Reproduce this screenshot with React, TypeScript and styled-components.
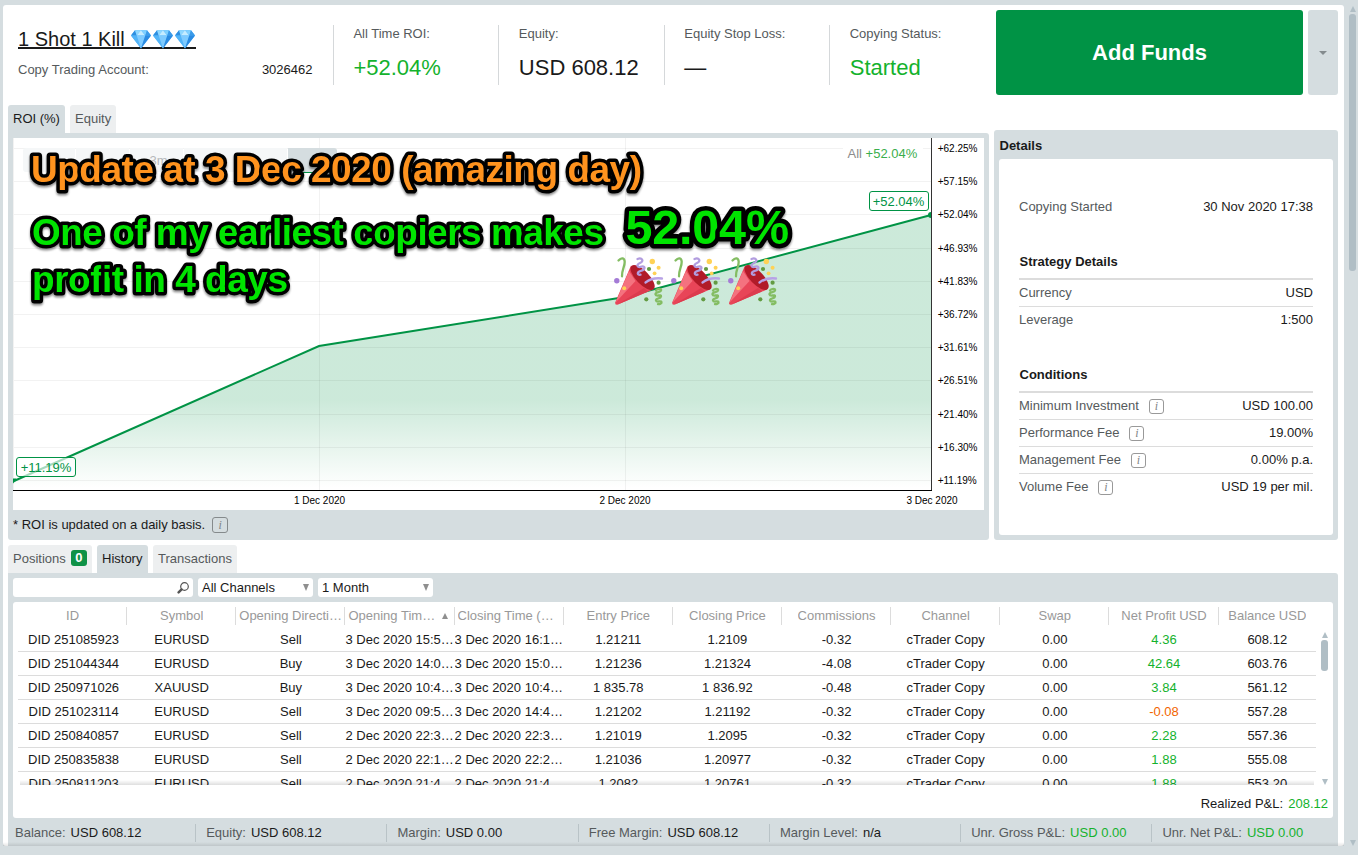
import React from "react";
import styled, { createGlobalStyle } from "styled-components";

const c = {
  frame: "#d5dde0",
  thumb: "#b0bec5",
  green: "#009345",
  bright: "#14b22d",
  text: "#1a1a1a",
  label: "#555a5c",
  muted: "#999",
  line: "#dcdcdc",
};

const GlobalStyle = createGlobalStyle`
  * { box-sizing: border-box; }
  body { margin: 0; background: ${c.frame}; }
  body, button { font-family: "Liberation Sans", Arial, sans-serif; font-size: 13px; color: ${c.text}; }
`;

const Frame = styled.div`
  display: flex;
  height: 855px;
  width: 1358px;
  padding: 5px 0 9px 3px;
  overflow: hidden;
  background: ${c.frame};
`;

const Page = styled.main`
  position: relative;
  width: 1341px;
  height: 841px;
  padding: 5px 6px 0 5px;
  border-radius: 3px;
  background: #fff;
  display: flex;
  flex-direction: column;
  &::after {
    content: "";
    position: absolute;
    left: 0;
    right: 0;
    bottom: 0;
    height: 4px;
    background: linear-gradient(rgba(0, 0, 0, 0), rgba(0, 0, 0, 0.1));
  }
`;

const ScrollRail = styled.div<{ $pad?: string }>`
  display: flex;
  flex-direction: column;
  align-items: center;
  padding: ${(p) => p.$pad || "0"};
`;
const Thumb = styled.div<{ $h: number }>`
  width: 7px;
  height: ${(p) => p.$h}px;
  margin: 2px 0 auto;
  border-radius: 3px;
  background: ${c.thumb};
`;
const Triangle = styled.i<{ $up?: boolean; $w?: number; $h?: number; $color?: string }>`
  display: block;
  flex: none;
  width: 0;
  height: 0;
  border: solid transparent;
  border-width: 0 ${(p) => (p.$w || 7) / 2}px;
  ${(p) => (p.$up ? "border-bottom" : "border-top")}: ${(p) => p.$h || 6}px solid ${(p) => p.$color || c.thumb};
`;

const Header = styled.header`
  display: flex;
  height: 85px;
`;
const Account = styled.section`
  width: 325px;
  padding: 17px 20.5px 0 10px;
`;
const Title = styled.h1`
  display: flex;
  align-items: center;
  height: 22px;
  padding-top: 3px;
  margin: 0;
  width: 178px;
  border-bottom: 2px solid ${c.text};
  font-size: 20px;
  font-weight: 400;
  line-height: 22px;
  white-space: pre;
  svg { flex: none; }
`;
const AccountRow = styled.div`
  display: flex;
  justify-content: space-between;
  margin-top: 13px;
  line-height: 16px;
  color: ${c.label};
  b { font-weight: 400; color: ${c.text}; }
`;
const Stat = styled.div`
  width: 165.45px;
  height: 60px;
  margin-top: 15px;
  padding-left: 19.4px;
  border-left: 1px solid #d5d8da;
  white-space: nowrap;
`;
const StatLabel = styled.div`
  height: 18px;
  line-height: 18px;
  color: ${c.label};
`;
const StatValue = styled.div<{ $good?: boolean }>`
  margin-top: 12px;
  font-size: 22px;
  line-height: 26px;
  color: ${(p) => (p.$good ? c.bright : c.text)};
`;
const AddFunds = styled.button`
  width: 307px;
  margin-left: auto;
  border: 0;
  border-radius: 3px;
  background: ${c.green};
  color: #fff;
  font-size: 22px;
  font-weight: 700;
`;
const MoreButton = styled.button`
  display: flex;
  align-items: center;
  justify-content: center;
  width: 30px;
  margin-left: 5px;
  padding: 1px 0 0;
  border: 0;
  border-radius: 3px;
  background: ${c.frame};
`;

const Middle = styled.div`
  display: flex;
  gap: 5px;
  margin-top: 10px;
  height: 435px;
`;
const ChartColumn = styled.section`
  width: 981px;
`;
const Tabs = styled.div`
  display: flex;
  gap: 5px;
  height: 28px;
`;
const Tab = styled.div<{ $active?: boolean; $w: number }>`
  display: flex;
  align-items: center;
  width: ${(p) => p.$w}px;
  padding: 0 0 2px 5px;
  border-radius: 3px 3px 0 0;
  white-space: nowrap;
  background: ${(p) => (p.$active ? c.frame : "#edeff0")};
  color: ${(p) => (p.$active ? c.text : "#55595b")};
`;
const Badge = styled.span`
  width: 16px;
  height: 16px;
  margin: 0 0 0 5px;
  border-radius: 3px;
  background: #0f9247;
  color: #fff;
  font-weight: 700;
  line-height: 16px;
  text-align: center;
`;
const ChartPanel = styled.div`
  height: 407px;
  padding: 5px 5px 0;
  border-radius: 0 3px 3px 3px;
  background: ${c.frame};
`;
const ChartArea = styled.div`
  position: relative;
  height: 372px;
  background: #fff;
  > svg { display: block; }
`;
const Note = styled.div`
  display: flex;
  align-items: center;
  height: 29px;
`;
const InfoBox = styled.span<{ $gap: number; $size?: number }>`
  display: inline-flex;
  align-items: center;
  justify-content: center;
  width: ${(p) => p.$size || 15}px;
  height: ${(p) => p.$size || 15}px;
  margin-left: ${(p) => p.$gap}px;
  border: 1px solid #858a8c;
  border-radius: 3px;
  color: #7f8486;
  font: italic 12px/12px "Liberation Serif", "Times New Roman", serif;
`;

const Periods = styled.div`
  position: absolute;
  left: 10px;
  top: 10px;
  display: flex;
  gap: 1px;
  height: 24px;
  border-radius: 3px;
  overflow: hidden;
`;
const Period = styled.span<{ $w: number; $on?: boolean }>`
  width: ${(p) => p.$w}px;
  padding-left: 4px;
  line-height: 25px;
  text-align: center;
  background: ${(p) => (p.$on ? "#d5dde0" : "#f5f7f8")};
  color: #b5b9bb;
`;
const Legend = styled.div`
  position: absolute;
  left: 829.5px;
  top: 6px;
  width: 80px;
  padding-left: 5px;
  line-height: 20px;
  background: #fff;
  color: #8c8c8c;
  white-space: nowrap;
  b { font-weight: 400; color: #3aae4c; }
`;
const ValueTag = styled.div<{ $x: number; $y: number }>`
  position: absolute;
  left: ${(p) => p.$x}px;
  top: ${(p) => p.$y}px;
  width: 60px;
  height: 20px;
  border: 1px solid ${c.green};
  border-radius: 3px;
  background: rgba(255, 255, 255, 0.65);
  color: ${c.green};
  line-height: 19px;
  text-align: center;
`;
const Annotations = styled.svg`
  position: absolute;
  left: 0;
  top: 0;
  font-weight: 700;
  filter: drop-shadow(0 2px 1px rgba(0, 0, 0, 0.45));
  text {
    stroke: #000;
    stroke-linejoin: round;
    paint-order: stroke fill;
  }
`;
const Poppers = styled.div`
  position: absolute;
  left: 600px;
  top: 118px;
  display: flex;
  gap: 5px;
`;

const Details = styled.aside`
  flex: 1;
  height: 410px;
  margin-top: 25px;
  padding: 0 5px 5px;
  border-radius: 3px;
  background: ${c.frame};
  display: flex;
  flex-direction: column;
  h2 {
    margin: 0;
    height: 29px;
    padding-left: 0.5px;
    line-height: 31px;
    font-size: 13px;
  }
`;
const DetailsBody = styled.div`
  flex: 1;
  padding: 35px 20px 0;
  border-radius: 3px;
  background: #fff;
`;
const DetailGroup = styled.section`
  margin-top: 24px;
  h3 {
    margin: 0;
    height: 35px;
    padding: 1px 0 0 0.5px;
    line-height: 32px;
    font-size: 13px;
    border-bottom: 2px solid ${c.line};
  }
`;
const DetailRow = styled.div`
  display: flex;
  align-items: center;
  height: 27px;
  padding-bottom: 2px;
  color: ${c.label};
  border-bottom: 1px solid ${c.line};
  &:last-child { border-bottom-color: transparent; }
  > b {
    margin-left: auto;
    font-weight: 400;
    color: ${c.text};
  }
  > ${InfoBox} { position: relative; top: 1px; border-color: #999; }
`;
const StartedRow = styled(DetailRow)`
  border-bottom-color: transparent;
`;

const BottomTabs = styled(Tabs)`
  margin-top: 5px;
`;
const TablePanel = styled.section`
  flex: 1;
  padding: 5px 5px 0;
  border-radius: 0 3px 0 0;
  background: ${c.frame};
`;
const Filters = styled.div`
  display: flex;
  gap: 5px;
  height: 19px;
  margin-bottom: 5px;
`;
const Field = styled.div<{ $w: number }>`
  display: flex;
  align-items: center;
  justify-content: space-between;
  width: ${(p) => p.$w}px;
  padding: 0 4px;
  border-radius: 3px;
  background: #fff;
`;
const TableCard = styled.div`
  height: 216px;
  padding-left: 5px;
  border-radius: 3px;
  background: #fff;
`;
const Row = styled.div`
  display: grid;
  grid-template-columns: repeat(11, 109.15px) 1fr;
  width: 1298px;
  height: 24px;
  line-height: 23px;
  border-bottom: 1px solid ${c.line};
`;
const HeadRow = styled(Row)`
  height: 26px;
  padding-top: 5px;
  line-height: 18px;
  border: 0;
  color: ${c.muted};
`;
const Cell = styled.span<{ $color?: string }>`
  overflow: hidden;
  text-overflow: ellipsis;
  white-space: nowrap;
  text-align: center;
  color: ${(p) => p.$color || "inherit"};
  ${Row} > &:first-child { padding-left: 2px; }
`;
const HeadCell = styled.div`
  display: flex;
  align-items: center;
  justify-content: center;
  height: 18px;
  padding: 0 2px 0 3px;
  border-right: 1px solid ${c.line};
  &:last-child { border: 0; padding-right: 3px; }
  > i { margin: 0 4px 0 4px; }
`;
const BodyWrap = styled.div`
  display: flex;
  height: 157px;
`;
const Body = styled.div`
  position: relative;
  width: 1298px;
  overflow: hidden;
  &::after {
    content: "";
    position: absolute;
    left: 2px;
    right: 2px;
    bottom: 0;
    height: 5px;
    background: linear-gradient(rgba(0, 0, 0, 0), rgba(0, 0, 0, 0.13));
  }
`;
const Realized = styled.div`
  height: 33px;
  padding: 3px 5px 0 0;
  line-height: 32px;
  text-align: right;
  b { font-weight: 400; color: ${c.bright}; margin-left: 1.5px; }
`;
const StatusBar = styled.footer`
  display: flex;
  height: 28px;
  padding-top: 6px;
  margin: 0 -5px;
`;
const StatusItem = styled.div<{ $good?: boolean }>`
  flex: none;
  width: 191.25px;
  height: 18px;
  padding-left: 10px;
  line-height: 18px;
  border-left: 1px solid #b9c3c7;
  white-space: nowrap;
  color: ${c.label};
  &:first-child { width: 187.2px; border: 0; padding-left: 7px; }
  &:last-child { width: 184px; }
  b { margin-left: 5px; font-weight: 400; color: ${(p) => (p.$good ? c.bright : c.text)}; }
`;

const Diamond = () => (
  <svg width="22" height="22" viewBox="0 0 22 22">
    <path d="M5 2.2h12l4 5.300L11 20.500 1 7.500z" fill="#4db1fb" />
    <path d="M5 2.200 1 7.500h5.700z" fill="#2f8fe0" />
    <path d="M5 2.200h6L6.700 7.500z" fill="#8fd8ff" />
    <path d="M11 2.200 15.300 7.500H6.700z" fill="#c5ecff" />
    <path d="M11 2.200h6l-1.700 5.300z" fill="#7fd0ff" />
    <path d="M17 2.200 21 7.500h-5.700z" fill="#3b9ae8" />
    <path d="M1 7.500h5.700L11 20.500z" fill="#52b4f8" />
    <path d="M6.700 7.500h8.600L11 20.500z" fill="#7ecbff" />
    <path d="M15.300 7.500H21L11 20.500z" fill="#2b8be2" />
  </svg>
);

const Popper = () => (
  <svg width="52" height="52" viewBox="0 0 52 52" fill="none" strokeLinecap="round">
    <path d="M18 9.500 2.200 46.500q-.5 2.500 2 2.300L40 33.500z" fill="#e84558" />
    <path d="M16 15 2.600 46.600 22.500 25z" fill="#f4727f" />
    <path d="M4.200 48.700 31 32l4 3.600z" fill="#dc3b4e" />
    <ellipse cx="29.600" cy="21.500" rx="16" ry="6.600" transform="rotate(46 29.600 21.500)" fill="#b11b29" />
    <path d="M5.500 4.500c3-3.500 6-2.500 6.200 1.300.2 4.500-3 8.500-2.700 14.500" stroke="#84bd63" strokeWidth="2.300" />
    <path d="M24.500 3c4.500-1.800 7 2 2.500 4-4.500 2-2.500 5 1.500 3.700 4.500-1.200 3.500 3 0 4-5 1.200-4.500 4.700-1 4" stroke="#b29ddf" strokeWidth="2.300" />
    <path d="M32.500 26.500c4.500-3.500 10-4.800 16.500-4" stroke="#b8a2e6" strokeWidth="2.300" />
    <path d="M43 34.500c1-2 6-2.500 5 0-.8 2-6 1.500-5.500 4s6-.5 5.500 2-5.500 1.600-5 4 5-.2 5.500 1.500-2 2.300-3.500 2.200" stroke="#84bd63" strokeWidth="2.300" />
    <g fill="#ffd255"><circle cx="39.300" cy="5.500" r="2.700" /><circle cx="45.600" cy="11.700" r="2" /><circle cx="41.600" cy="17.300" r="1.900" /><circle cx="11.200" cy="32.300" r="2" /></g>
    <g fill="#639b42"><circle cx="36" cy="13" r="2.100" /><circle cx="45.600" cy="26.700" r="2.100" /><circle cx="33.300" cy="43.300" r="2.100" /></g>
    <circle cx="3.800" cy="24.700" r="2.700" fill="#a47bd6" />
  </svg>
);

const SearchIcon = () => (
  <svg width="12" height="12" viewBox="0 0 12 12" fill="none" stroke="#555" >
    <circle cx="7.500" cy="4.500" r="3.800" strokeWidth="1.200" />
    <path d="M4.600 7.400 1.600 10.400" strokeWidth="2.400" strokeLinecap="round" />
  </svg>
);

const Info = ({ gap = 10, size = 15 }: { gap?: number; size?: number }) => <InfoBox $gap={gap} $size={size}>i</InfoBox>;

const levels: [number, string][] = [
  [10, "+62.25%"], [43, "+57.15%"], [76, "+52.04%"], [110, "+46.93%"], [143, "+41.83%"], [176, "+36.72%"],
  [209, "+31.61%"], [242, "+26.51%"], [276, "+21.40%"], [309, "+16.30%"], [342, "+11.19%"],
];

const RoiChart = () => (
  <svg width="971" height="372" fontFamily="Liberation Sans, Arial, sans-serif" fontSize="10">
    <defs>
      <linearGradient id="fade" gradientUnits="userSpaceOnUse" x1="0" y1="77" x2="0" y2="350">
        <stop offset="0" stopColor={c.green} stopOpacity="0.2" />
        <stop offset="0.68" stopColor={c.green} stopOpacity="0.2" />
        <stop offset="1" stopColor={c.green} stopOpacity="0" />
      </linearGradient>
    </defs>
    <path d="M1 343 306 208 612 159 918 77V352H1z" fill="url(#fade)" />
    <g stroke="#000" strokeOpacity="0.05">
      {levels.map(([y]) => <path key={y} d={`M1 ${y + 0.5}H918`} />)}
      <path d="M306.500 0V352M612.500 0V352M.5 0V352" />
    </g>
    <path d="M1 343 306 208 612 159 918 77" fill="none" stroke={c.green} strokeWidth="2" />
    <path d="M0 340.500h3l1 1-4 4zM918 74v6a3 3 0 0 1 0-6z" fill={c.green} />
    <path d="M290 34.500h12" stroke={c.green} />
    <path d="M0 352.500H919" stroke="#000" />
    <path d="M918.500 0V352" stroke="#333" />
    {levels.map(([y, t]) => <text key={t} x="924.700" y={y + 4}>{t}</text>)}
    <g textAnchor="middle">
      <text x="306.500" y="366">1 Dec 2020</text>
      <text x="612" y="366">2 Dec 2020</text>
      <text x="919" y="366">3 Dec 2020</text>
    </g>
  </svg>
);

const columns = ["ID", "Symbol", "Opening Direction", "Opening Time (UTC+7)", "Closing Time (UTC+7)", "Entry Price", "Closing Price", "Commissions", "Channel", "Swap", "Net Profit USD", "Balance USD"];
const deals = [
  ["251085923", "EURUSD", "Sell", "3 Dec 2020 15:55:10", "3 Dec 2020 16:12:40", "1.21211", "1.2109", "-0.32", "4.36", "608.12"],
  ["251044344", "EURUSD", "Buy", "3 Dec 2020 14:05:10", "3 Dec 2020 15:02:40", "1.21236", "1.21324", "-4.08", "42.64", "603.76"],
  ["250971026", "XAUUSD", "Buy", "3 Dec 2020 10:41:10", "3 Dec 2020 10:49:40", "1 835.78", "1 836.92", "-0.48", "3.84", "561.12"],
  ["251023114", "EURUSD", "Sell", "3 Dec 2020 09:55:10", "3 Dec 2020 14:42:40", "1.21202", "1.21192", "-0.32", "-0.08", "557.28"],
  ["250840857", "EURUSD", "Sell", "2 Dec 2020 22:35:10", "2 Dec 2020 22:38:40", "1.21019", "1.2095", "-0.32", "2.28", "557.36"],
  ["250835838", "EURUSD", "Sell", "2 Dec 2020 22:15:10", "2 Dec 2020 22:22:40", "1.21036", "1.20977", "-0.32", "1.88", "555.08"],
  ["250811203", "EURUSD", "Sell", "2 Dec 2020 21:45:10", "2 Dec 2020 21:48:40", "1.2082", "1.20761", "-0.32", "1.88", "553.20"],
];
const status = [
  ["Balance:", "USD 608.12"], ["Equity:", "USD 608.12"], ["Margin:", "USD 0.00"], ["Free Margin:", "USD 608.12"],
  ["Margin Level:", "n/a"], ["Unr. Gross P&L:", "USD 0.00"], ["Unr. Net P&L:", "USD 0.00"],
];
const stats = [
  ["All Time ROI:", "+52.04%"], ["Equity:", "USD 608.12"], ["Equity Stop Loss:", "—"], ["Copying Status:", "Started"],
];
const fees = [
  ["Minimum Investment", "USD 100.00"], ["Performance Fee", "19.00%"], ["Management Fee", "0.00% p.a."], ["Volume Fee", "USD 19 per mil."],
];

export default function App() {
  return (
    <Frame>
      <GlobalStyle />
      <Page>
        <Header>
          <Account>
            <Title>{"1 Shot 1 Kill "}<Diamond /><Diamond /><Diamond /></Title>
            <AccountRow>Copy Trading Account:<b>3026462</b></AccountRow>
          </Account>
          {stats.map(([label, value], i) => (
            <Stat key={label}>
              <StatLabel>{label}</StatLabel>
              <StatValue $good={i === 0 || i === 3}>{value}</StatValue>
            </Stat>
          ))}
          <AddFunds>Add Funds</AddFunds>
          <MoreButton><Triangle $w={8} $h={4} $color="#848b8e" /></MoreButton>
        </Header>

        <Middle>
          <ChartColumn>
            <Tabs>
              <Tab $active $w={57}>ROI (%)</Tab>
              <Tab $w={46}>Equity</Tab>
            </Tabs>
            <ChartPanel>
              <ChartArea>
                <RoiChart />
                <Periods>
                  <Period $w={52} />
                  <Period $w={53} />
                  <Period $w={53}>3m</Period>
                  <Period $w={103} />
                  <Period $w={49} $on />
                </Periods>
                <Legend>All <b>+52.04%</b></Legend>
                <ValueTag $x={855.5} $y={53}>+52.04%</ValueTag>
                <ValueTag $x={3} $y={319}>+11.19%</ValueTag>
                <Annotations width="971" height="200" fontSize="37" strokeWidth="7">
                  <text x="18" y="44" fill="#ff931e" textLength="611">Update at 3 Dec 2020 (amazing day)</text>
                  <g fill="#00e400">
                    <text x="19" y="107" textLength="572">One of my earliest copiers makes</text>
                    <text x="612.500" y="106" fontSize="48.500" strokeWidth="9" textLength="163.500">52.04%</text>
                    <text x="19" y="154" textLength="256">profit in 4 days</text>
                  </g>
                </Annotations>
                <Poppers><Popper /><Popper /><Popper /></Poppers>
              </ChartArea>
              <Note>* ROI is updated on a daily basis.<Info gap={7} size={16} /></Note>
            </ChartPanel>
          </ChartColumn>

          <Details>
            <h2>Details</h2>
            <DetailsBody>
              <StartedRow>Copying Started<b>30 Nov 2020 17:38</b></StartedRow>
              <DetailGroup>
                <h3>Strategy Details</h3>
                <DetailRow>Currency<b>USD</b></DetailRow>
                <DetailRow>Leverage<b>1:500</b></DetailRow>
              </DetailGroup>
              <DetailGroup>
                <h3>Conditions</h3>
                {fees.map(([label, value]) => (
                  <DetailRow key={label}>{label}<Info /><b>{value}</b></DetailRow>
                ))}
              </DetailGroup>
            </DetailsBody>
          </Details>
        </Middle>

        <BottomTabs>
          <Tab $w={84}>Positions<Badge>0</Badge></Tab>
          <Tab $active $w={51}>History</Tab>
          <Tab $w={84}>Transactions</Tab>
        </BottomTabs>
        <TablePanel>
          <Filters>
            <Field $w={180}><span /><SearchIcon /></Field>
            <Field $w={115}>All Channels<Triangle $h={7} $color="#8f8f8f" /></Field>
            <Field $w={115}>1 Month<Triangle $h={7} $color="#8f8f8f" /></Field>
          </Filters>
          <TableCard>
            <HeadRow>
              {columns.map((name, i) => (
                <HeadCell key={name}><Cell>{name}</Cell>{i === 3 && <Triangle $up $color="#8f8f8f" />}</HeadCell>
              ))}
            </HeadRow>
            <BodyWrap>
              <Body>
                {deals.map(([id, symbol, side, opened, closed, entry, close, fee, net, balance]) => (
                  <Row key={id}>
                    <Cell>DID {id}</Cell>
                    <Cell>{symbol}</Cell>
                    <Cell>{side}</Cell>
                    <Cell>{opened}</Cell>
                    <Cell>{closed}</Cell>
                    <Cell>{entry}</Cell>
                    <Cell>{close}</Cell>
                    <Cell>{fee}</Cell>
                    <Cell>cTrader Copy</Cell>
                    <Cell>0.00</Cell>
                    <Cell $color={net.startsWith("-") ? "#f26500" : c.bright}>{net}</Cell>
                    <Cell>{balance}</Cell>
                  </Row>
                ))}
              </Body>
              <ScrollRail $pad="4px 0 0 5px">
                <Triangle $up />
                <Thumb $h={31} />
                <Triangle />
              </ScrollRail>
            </BodyWrap>
            <Realized>Realized P&amp;L: <b>208.12</b></Realized>
          </TableCard>
          <StatusBar>
            {status.map(([label, value], i) => (
              <StatusItem key={label} $good={i > 4}>{label}<b>{value}</b></StatusItem>
            ))}
          </StatusBar>
        </TablePanel>
      </Page>
      <ScrollRail $pad="1px 0 0 5px">
        <Triangle $up />
        <Thumb $h={257} />
        <Triangle />
      </ScrollRail>
    </Frame>
  );
}
